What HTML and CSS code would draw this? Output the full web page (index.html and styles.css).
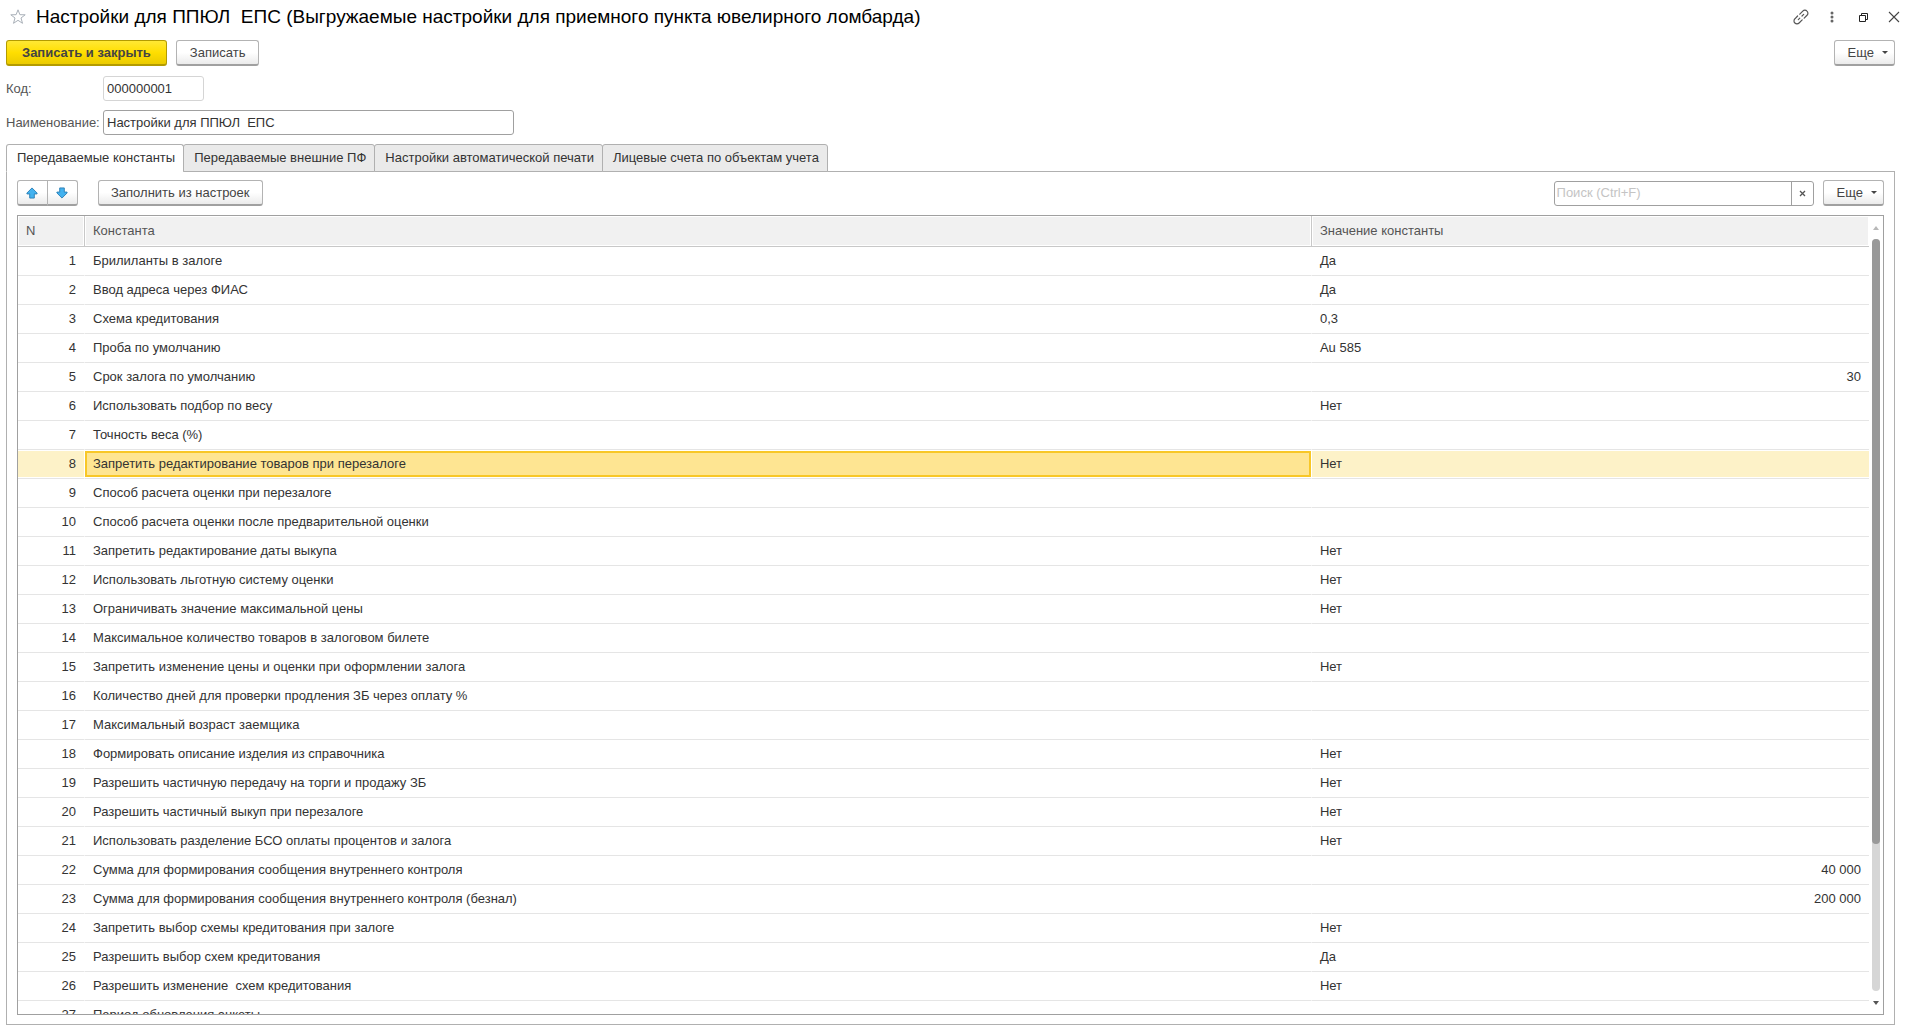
FILE: index.html
```html
<!DOCTYPE html>
<html lang="ru">
<head>
<meta charset="utf-8">
<title>Настройки для ППЮЛ ЕПС</title>
<link rel="stylesheet" href="styles.css">
</head>
<body>
<header class="titlebar">
  <button class="icon-btn" type="button" aria-label="В избранное">
    <svg width="16" height="16" viewBox="0 0 16 16" fill="none" stroke="#a9b0b8"><path d="M8 .8l1.900 4.900 5.300.1-4.200 3.200 1.500 5.300L8 11.300l-4.500 3 1.500-5.300L.8 5.800l5.300-.1z"/></svg>
  </button>
  <h1 class="title">Настройки для ППЮЛ  ЕПС (Выгружаемые настройки для приемного пункта ювелирного ломбарда)</h1>
  <div class="window-tools">
    <button class="icon-btn" type="button" aria-label="Ссылка">
      <svg width="16" height="16" viewBox="0 0 16 16" fill="none" stroke="#555" stroke-width="1.200" stroke-linecap="round"><path d="M5.300 10.700l1.500-1.500M9 7l1.700-1.700M6.800 5.200l3-3.100a2.900 2.900 0 0 1 4.200 0 2.900 2.900 0 0 1 0 4.200l-2.800 2.900M4.600 7l-2.700 2.800a2.900 2.900 0 0 0 0 4.200 2.900 2.900 0 0 0 4.200 0l3.100-3.100"/></svg>
    </button>
    <button class="icon-btn" type="button" aria-label="Меню">
      <svg width="16" height="16" viewBox="0 0 16 16" fill="#666"><circle cx="8" cy="4" r="1.500"/><circle cx="8" cy="8" r="1.500"/><circle cx="8" cy="12" r="1.500"/></svg>
    </button>
    <button class="icon-btn" type="button" aria-label="Свернуть в окно">
      <svg width="16" height="16" viewBox="0 0 16 16" fill="none" stroke="#222"><path d="M4.500 6.500h6v6h-6zM6.500 6V4.500h6v6H11"/></svg>
    </button>
    <button class="icon-btn" type="button" aria-label="Закрыть">
      <svg width="16" height="16" viewBox="0 0 16 16" fill="none" stroke="#444" stroke-width="1.100"><path d="M3 3l10 10M13 3L3 13"/></svg>
    </button>
  </div>
</header>

<main class="form">
  <div class="commands">
    <button class="btn btn-primary" type="button">Записать и закрыть</button>
    <button class="btn" type="button">Записать</button>
    <button class="btn btn-more" type="button">Еще<span class="caret"></span></button>
  </div>

  <div class="field">
    <label for="code">Код:</label>
    <input class="input input-code" id="code" type="text" value="000000001" readonly>
  </div>
  <div class="field">
    <label for="name">Наименование:</label>
    <input class="input input-name" id="name" type="text" value="Настройки для ППЮЛ  ЕПС">
  </div>

  <div class="tabs" role="tablist">
    <button class="tab tab-active" type="button" role="tab" aria-selected="true">Передаваемые константы</button>
    <button class="tab" type="button" role="tab" aria-selected="false">Передаваемые внешние ПФ</button>
    <button class="tab" type="button" role="tab" aria-selected="false">Настройки автоматической печати</button>
    <button class="tab" type="button" role="tab" aria-selected="false">Лицевые счета по объектам учета</button>
  </div>

  <section class="panel" role="tabpanel">
    <div class="toolbar">
      <div class="btn-group">
        <button class="btn btn-arrow" type="button" aria-label="Переместить вверх">
          <svg width="12" height="12" viewBox="0 0 13 13" fill="#43b2ef" stroke="#2b7fb5"><path d="M6.500 1L12 6.500v1H9v4.500H4V7.500H1v-1z"/></svg>
        </button>
        <button class="btn btn-arrow" type="button" aria-label="Переместить вниз">
          <svg width="12" height="12" viewBox="0 0 13 13" fill="#43b2ef" stroke="#2b7fb5"><path d="M6.500 12L12 6.500v-1H9V1H4v4.500H1v1z"/></svg>
        </button>
      </div>
      <button class="btn btn-fill" type="button">Заполнить из настроек</button>
      <div class="search">
        <input class="search-input" type="text" placeholder="Поиск (Ctrl+F)" aria-label="Поиск">
        <button class="search-clear" type="button" aria-label="Очистить">
          <svg width="7" height="7" viewBox="0 0 7 7" stroke="#555" stroke-width="1.300"><path d="M1 1l5 5M6 1L1 6"/></svg>
        </button>
      </div>
      <button class="btn btn-more" type="button">Еще<span class="caret"></span></button>
    </div>

    <div class="grid">
      <div class="grid-view">
        <table class="table">
          <colgroup><col class="col-n"><col><col class="col-value"></colgroup>
          <thead><tr><th>N</th><th>Константа</th><th>Значение константы</th></tr></thead>
          <tbody>
            <tr><td>1</td><td>Брилиланты в залоге</td><td>Да</td></tr>
            <tr><td>2</td><td>Ввод адреса через ФИАС</td><td>Да</td></tr>
            <tr><td>3</td><td>Схема кредитования</td><td>0,3</td></tr>
            <tr><td>4</td><td>Проба по умолчанию</td><td>Au 585</td></tr>
            <tr><td>5</td><td>Срок залога по умолчанию</td><td class="num">30</td></tr>
            <tr><td>6</td><td>Использовать подбор по весу</td><td>Нет</td></tr>
            <tr><td>7</td><td>Точность веса (%)</td><td></td></tr>
            <tr class="selected"><td>8</td><td class="current">Запретить редактирование товаров при перезалоге</td><td>Нет</td></tr>
            <tr><td>9</td><td>Способ расчета оценки при перезалоге</td><td></td></tr>
            <tr><td>10</td><td>Способ расчета оценки после предварительной оценки</td><td></td></tr>
            <tr><td>11</td><td>Запретить редактирование даты выкупа</td><td>Нет</td></tr>
            <tr><td>12</td><td>Использовать льготную систему оценки</td><td>Нет</td></tr>
            <tr><td>13</td><td>Ограничивать значение максимальной цены</td><td>Нет</td></tr>
            <tr><td>14</td><td>Максимальное количество товаров в залоговом билете</td><td></td></tr>
            <tr><td>15</td><td>Запретить изменение цены и оценки при оформлении залога</td><td>Нет</td></tr>
            <tr><td>16</td><td>Количество дней для проверки продления ЗБ через оплату %</td><td></td></tr>
            <tr><td>17</td><td>Максимальный возраст заемщика</td><td></td></tr>
            <tr><td>18</td><td>Формировать описание изделия из справочника</td><td>Нет</td></tr>
            <tr><td>19</td><td>Разрешить частичную передачу на торги и продажу ЗБ</td><td>Нет</td></tr>
            <tr><td>20</td><td>Разрешить частичный выкуп при перезалоге</td><td>Нет</td></tr>
            <tr><td>21</td><td>Использовать разделение БСО оплаты процентов и залога</td><td>Нет</td></tr>
            <tr><td>22</td><td>Сумма для формирования сообщения внутреннего контроля</td><td class="num">40 000</td></tr>
            <tr><td>23</td><td>Сумма для формирования сообщения внутреннего контроля (безнал)</td><td class="num">200 000</td></tr>
            <tr><td>24</td><td>Запретить выбор схемы кредитования при залоге</td><td>Нет</td></tr>
            <tr><td>25</td><td>Разрешить выбор схем кредитования</td><td>Да</td></tr>
            <tr><td>26</td><td>Разрешить изменение  схем кредитования</td><td>Нет</td></tr>
            <tr><td>27</td><td>Период обновления анкеты</td><td></td></tr>
          </tbody>
        </table>
      </div>
      <div class="scroll" aria-hidden="true">
        <span class="scroll-up"></span>
        <div class="scroll-track"><div class="scroll-thumb"></div></div>
        <span class="scroll-down"></span>
      </div>
    </div>
  </section>
</main>
</body>
</html>
```

FILE: styles.css
```css
* { box-sizing: border-box; }

body {
  margin: 0;
  height: 100vh;
  display: flex;
  flex-direction: column;
  background: #fff;
  color: #333;
  font: 13px/16px "Liberation Sans", Arial, sans-serif;
}

button, input { font: inherit; color: inherit; }

/* Window title */
.titlebar {
  display: flex;
  align-items: center;
  gap: 10px;
  height: 36px;
  padding: 0 8px 2px 10px;
}
.title {
  flex: 1;
  margin: 0;
  color: #000;
  font-size: 19px;
  line-height: 24px;
  font-weight: 400;
  white-space: pre;
}
.window-tools { display: flex; gap: 15px; }
.icon-btn {
  display: flex;
  padding: 0;
  border: 0;
  background: none;
}

/* Form */
.form {
  flex: 1;
  min-height: 0;
  display: flex;
  flex-direction: column;
  padding: 4px 15px 6px 6px;
}
.commands { display: flex; gap: 9px; margin-bottom: 10px; }
.btn {
  height: 26px;
  padding: 0 13px;
  border: 1px solid #b3b3b3;
  border-bottom: 2px solid #a0a0a0;
  border-radius: 3px;
  background: linear-gradient(#fff 50%, #ebebeb);
  color: #444;
  white-space: nowrap;
}
.btn-primary {
  padding: 0 15px;
  border-color: #b39b00;
  background: linear-gradient(#ffe835, #ffde00 50%, #ebcb00);
  font-weight: 700;
}
.btn-fill { padding: 0 12px; }
.btn-more {
  display: flex;
  align-items: center;
  gap: 8px;
  margin-left: auto;
  padding: 0 6px 0 13px;
}
.caret {
  border: 3px solid transparent;
  border-top-color: #444;
  border-bottom: 0;
}

.field { display: flex; align-items: center; margin-bottom: 9px; }
.field label { width: 97px; color: #555; }
.input {
  height: 25px;
  padding: 0 3px;
  border: 1px solid #a0a0a0;
  border-radius: 3px;
  outline: 0;
}
.input-code { width: 101px; border-color: #d5d5d5; }
.input-name { width: 411px; }

/* Tabs */
.tabs { display: flex; position: relative; z-index: 1; margin-bottom: -1px; }
.tab {
  height: 28px;
  padding: 0 8px 1px 10px;
  border: 1px solid #b0b0b0;
  border-radius: 3px 3px 0 0;
  background: #eaeaea;
}
.tab + .tab { margin-left: -1px; }
.tab-active { border-bottom-color: #fff; background: #fff; }

.panel {
  flex: 1;
  min-height: 0;
  display: flex;
  flex-direction: column;
  padding: 8px 10px 9px;
  border: 1px solid #b0b0b0;
}
.toolbar { display: flex; align-items: center; margin-bottom: 9px; }
.toolbar .btn-more { margin-left: 9px; }
.btn-group { display: flex; margin-right: 20px; }
.btn-arrow {
  display: flex;
  align-items: center;
  justify-content: center;
  width: 31px;
  padding: 0 2px 0 0;
}
.btn-arrow:first-child { border-radius: 3px 0 0 3px; }
.btn-arrow:last-child { margin-left: -1px; border-radius: 0 3px 3px 0; }

.search {
  display: flex;
  width: 260px;
  height: 25px;
  margin-left: auto;
  border: 1px solid #a0a0a0;
  border-radius: 3px;
}
.search-input {
  flex: 1;
  min-width: 0;
  padding: 0 2px;
  border: 0;
  outline: 0;
  background: none;
}
.search-input::placeholder { color: #c4c4c4; }
.search-clear {
  display: flex;
  align-items: center;
  justify-content: center;
  width: 22px;
  padding: 0;
  border: 0;
  border-left: 1px solid #a0a0a0;
  background: none;
}

/* Data grid */
.grid {
  flex: 1;
  min-height: 0;
  display: flex;
  border: 1px solid #a0a0a0;
}
.grid-view { flex: 1; overflow: hidden; }
.table {
  width: 100%;
  table-layout: fixed;
  border-collapse: separate;
  border-spacing: 0;
}
.col-n { width: 66px; }
.col-value { width: 30.15%; }
.table th, .table td {
  height: 29px;
  padding: 0 8px;
  border-left: 1px solid transparent;
  background-clip: padding-box;
  text-align: left;
  white-space: pre;
}
.table th {
  height: 31px;
  border-left-color: #c8c8c8;
  border-bottom: 1px solid #c8c8c8;
  background-color: #f1f1f1;
  box-shadow: inset 0 0 0 1px #fff;
  color: #555;
  font-weight: 400;
}
.table td {
  padding-bottom: 1px;
  border-top: 1px solid transparent;
  border-bottom: 1px solid #e5e5e5;
}
.table th:first-child, .table td:first-child { border-left: 0; }
.table td:first-child, .table .num { text-align: right; }
.selected td { background-color: #fdf2c8; box-shadow: inset 0 -1px 0 #fff; }
.selected .current {
  background-color: #fee592;
  box-shadow: inset 0 -1px 0 #fff, inset 0 -3px 0 #f8c727, inset 0 0 0 2px #f8c727;
}

.scroll {
  display: flex;
  flex-direction: column;
  align-items: center;
  width: 14px;
  padding: 10px 0 9px;
}
.scroll-up, .scroll-down { border: 3px solid transparent; }
.scroll-up { border-top: 0; border-bottom: 4px solid #b8b8b8; }
.scroll-down { border-bottom: 0; border-top: 4px solid #555; }
.scroll-track {
  flex: 1;
  width: 8px;
  margin: 9px 0 10px;
  border-radius: 4px;
  background: #d6d6d6;
}
.scroll-thumb { height: 80.5%; border-radius: 4px; background: #999; }
```
